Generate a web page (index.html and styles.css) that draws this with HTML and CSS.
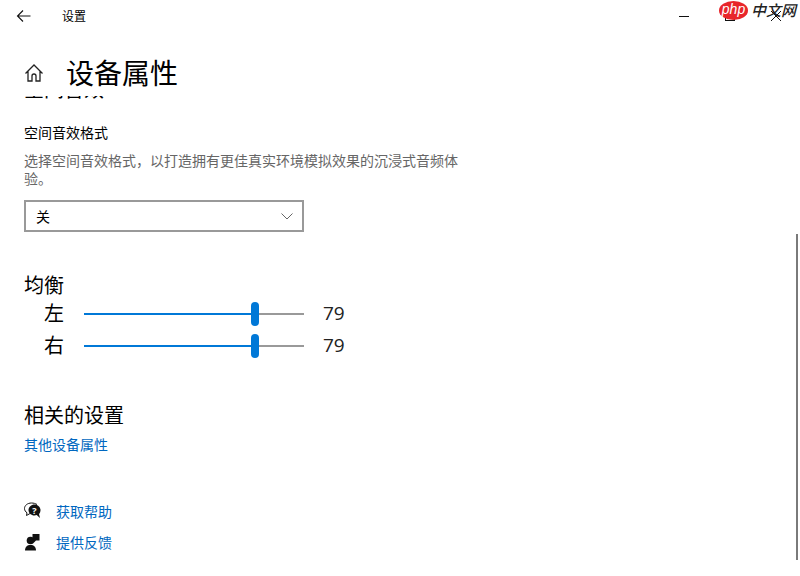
FILE: index.html
```html
<!DOCTYPE html>
<html lang="zh-CN">
<head>
  <meta charset="UTF-8" />
  <title>设置</title>
  <link rel="stylesheet" href="styles.css">
</head>
<body>

  <div class="titlebar">
    <svg class="back-icon" width="16" height="16" viewBox="0 0 16 16">
      <path d="M7 2.500 1.500 8 7 13.500M1.500 8H14.500" />
    </svg>
    <span class="app-name">设置</span>
    <div class="win-controls">
      <span class="win-btn"><i class="win-min"></i></span>
      <span class="win-btn"><i class="win-max"></i></span>
      <span class="win-btn">
        <svg width="12" height="12" viewBox="0 0 12 12"><path d="M1 1 11 11M11 1 1 11" /></svg>
      </span>
    </div>
  </div>

  <!-- watermark over the window buttons -->
  <div class="watermark">
    <span class="wm-php">php</span>
    <span class="wm-text">中文网</span>
  </div>

  <header class="page-head">
    <svg class="home-icon" width="20" height="20" viewBox="0 0 20 20">
      <path d="M1.500 10.500 10 2l8.500 8.500M4 8.500V18H8V13a2 2 0 0 1 4 0V18H16V8.500" />
    </svg>
    <h1>设备属性</h1>
  </header>

  <main class="content">
    <h2 class="clipped">空间音效</h2>

    <h3>空间音效格式</h3>
    <p class="desc">选择空间音效格式，以打造拥有更佳真实环境模拟效果的沉浸式音频体验。</p>

    <div class="select">
      <span>关</span>
      <svg width="14" height="8" viewBox="0 0 14 8"><path d="M1.500 1.500 7 7 12.500 1.500" /></svg>
    </div>

    <h2 class="balance-title">均衡</h2>
    <div class="slider-row">
      <span class="side">左</span>
      <div class="track"><div class="fill"></div><div class="thumb"></div><div class="rest"></div></div>
      <span class="value">79</span>
    </div>
    <div class="slider-row">
      <span class="side">右</span>
      <div class="track"><div class="fill"></div><div class="thumb"></div><div class="rest"></div></div>
      <span class="value">79</span>
    </div>

    <h2 class="related-title">相关的设置</h2>
    <a class="link" href="#">其他设备属性</a>

    <div class="help-list">
      <a class="help-item" href="#">
        <svg width="20" height="20" viewBox="0 0 20 20">
          <path class="outline" d="M13 3.500C11.500 2.500 9.500 2 7.500 2 3.500 2 .5 4.500 .5 7.500c0 1.800 1 3.300 2.500 4.300L2.500 14.500 6 12.500" />
          <path class="solid" d="M10.500 3.500c-3.300 0-6 2.500-6 5.500s2.700 5.500 6 5.500c.8 0 1.500-.1 2.200-.4L16 17l-1-4c1-1 1.500-2.500 1.500-4 0-3-2.700-5.500-6-5.500z" />
          <text class="qmark" x="10.500" y="12.500">?</text>
        </svg>
        <span>获取帮助</span>
      </a>
      <a class="help-item" href="#">
        <svg width="20" height="20" viewBox="0 0 20 20">
          <circle class="solid" cx="6.500" cy="8.500" r="3.800" />
          <path class="solid" d="M1 18.500c0-3.500 2-5.500 5.500-5.500s5.500 2 5.500 5.500z" />
          <path class="solid" d="M8.500 2h7v6.500h-3.500L9.500 11V7.500h-1z" />
        </svg>
        <span>提供反馈</span>
      </a>
    </div>
  </main>

  <div class="scrollbar"></div>

</body>
</html>
```

FILE: styles.css
```css
* {
  box-sizing: border-box;
}

html, body {
  height: 100%;
}

body {
  margin: 0;
  background: #fff;
  color: #000;
  font-family: "Open Sans", "Noto Sans CJK SC", sans-serif;
  overflow: hidden;
}

.titlebar {
  height: 32px;
  display: flex;
  align-items: center;
  padding-left: 16px;
}

.back-icon path {
  fill: none;
  stroke: #111;
  stroke-width: 1.100;
}

.app-name {
  margin-left: 30px;
  font-size: 12px;
}

.win-controls {
  margin-left: auto;
  display: flex;
  padding-right: 1px;
}

.win-btn {
  width: 46px;
  height: 32px;
  display: flex;
  align-items: center;
  justify-content: center;
}

.win-btn path {
  fill: none;
  stroke: #111;
  stroke-width: 1;
}

.win-min {
  width: 10px;
  height: 1px;
  background: #111;
}

.win-max {
  width: 10px;
  height: 10px;
  border: 1px solid #111;
}

.watermark {
  position: absolute;
  top: 0;
  right: 1px;
  height: 20px;
  width: 80px;
  display: flex;
  align-items: center;
  gap: 3px;
}

.wm-php {
  width: 29px;
  height: 19px;
  border-radius: 50%;
  background: #e8262b;
  color: #fff;
  font-family: "Liberation Sans", sans-serif;
  font-size: 14px;
  font-style: italic;
  line-height: 17px;
  text-align: center;
  flex: none;
}

.wm-text {
  font-family: "Noto Sans CJK SC", sans-serif;
  font-size: 15px;
  font-weight: 500;
  font-style: italic;
  line-height: 20px;
  color: #222;
  white-space: nowrap;
}

.page-head {
  height: 64px;
  display: flex;
  align-items: center;
  padding-left: 24px;
  padding-top: 18px;
}

.home-icon path {
  fill: none;
  stroke: #222;
  stroke-width: 1.300;
}

h1 {
  margin: 0 0 0 22px;
  font-size: 28px;
  font-weight: 400;
  line-height: 38px;
}

.content {
  height: 480px;
  padding-left: 24px;
  overflow: hidden;
}

h2 {
  margin: 0;
  font-size: 20px;
  font-weight: 400;
  line-height: 28px;
}

.clipped {
  margin-top: -20px;
}

h3 {
  margin: 18px 0 0;
  font-size: 14px;
  font-weight: 400;
  line-height: 22px;
}

.desc {
  margin: 8px 0 0;
  width: 440px;
  font-size: 14px;
  line-height: 18px;
  color: #666;
}

.select {
  width: 280px;
  height: 32px;
  margin-top: 12px;
  padding: 0 8px 0 10px;
  border: 2px solid #999;
  display: flex;
  align-items: center;
  justify-content: space-between;
  font-size: 14px;
}

.select path {
  fill: none;
  stroke: #666;
  stroke-width: 1;
}

.balance-title {
  margin-top: 43px;
  line-height: 22px;
}

.slider-row {
  height: 32px;
  display: flex;
  align-items: center;
  font-size: 20px;
}

.side {
  width: 40px;
  padding-bottom: 2px;
  text-align: right;
}

.track {
  width: 220px;
  margin-left: 20px;
  margin-top: 2px;
  display: flex;
  align-items: center;
}

.fill {
  width: 167px;
  height: 2px;
  background: #0078d7;
}

.thumb {
  width: 8px;
  height: 24px;
  border-radius: 4px;
  background: #0078d7;
}

.rest {
  flex: 1;
  height: 2px;
  background: #999;
}

.value {
  margin-left: 19px;
  font-size: 19px;
  color: #222;
}

.related-title {
  margin-top: 41px;
}

.link {
  display: block;
  margin-top: 4px;
  font-size: 14px;
  line-height: 22px;
  color: #0067c0;
  text-decoration: none;
}

.help-list {
  margin-top: 44px;
  display: flex;
  flex-direction: column;
  gap: 9px;
}

.help-item {
  height: 22px;
  display: flex;
  align-items: center;
  gap: 12px;
  font-size: 14px;
  color: #0067c0;
  text-decoration: none;
}

.help-item .solid {
  fill: #111;
}

.help-item .outline {
  fill: none;
  stroke: #111;
  stroke-width: 1;
}

.qmark {
  fill: #fff;
  font-size: 9px;
  font-weight: 700;
  text-anchor: middle;
}

.scrollbar {
  position: absolute;
  top: 234px;
  right: 2px;
  width: 2px;
  height: 326px;
  background: #7a7a7a;
}
```
